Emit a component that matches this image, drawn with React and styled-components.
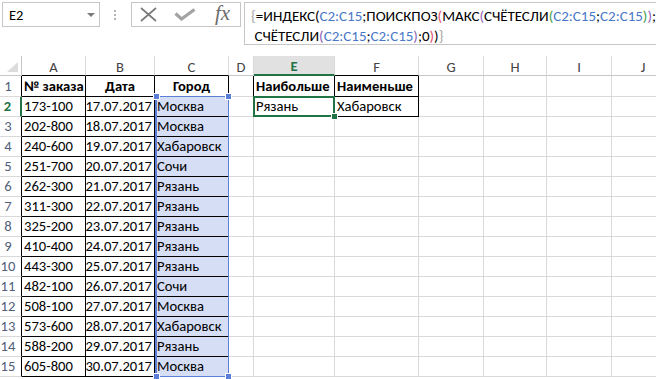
import React from 'react';
import styled, { createGlobalStyle } from 'styled-components';

const FONT = `Carlito, Calibri, "Liberation Sans Narrow", "DejaVu Sans Condensed", "Liberation Sans", sans-serif`;
const GRID = '#d9d9d9';
const GREEN = '#217346';
const REF = '#5b7fd6';

const GlobalStyle = createGlobalStyle`
  html, body { margin: 0; padding: 0; background: #fff; }
  body { font-family: ${FONT}; }
`;

const Window = styled.div`
  width: 656px;
  height: 379px;
  overflow: hidden;
  background: #fff;
`;

/* ---------- formula bar ---------- */
const FormulaBar = styled.div`
  display: flex;
  align-items: flex-start;
  height: 56px;
  padding: 2px 0 0 2px;
  box-sizing: border-box;
`;

const NameBox = styled.div`
  width: 99px;
  height: 25px;
  box-sizing: border-box;
  border: 1px solid #c6c6c6;
  display: flex;
  align-items: center;
  justify-content: space-between;
  padding: 0 4px 0 6px;
  font-size: 14.5px;
  color: #000;
`;

const DropArrow = styled.span`
  width: 0;
  height: 0;
  border-left: 4px solid transparent;
  border-right: 4px solid transparent;
  border-top: 4px solid #7a7a7a;
`;

const Grip = styled.div`
  width: 32px;
  height: 25px;
  display: flex;
  flex-direction: column;
  align-items: center;
  justify-content: center;
  gap: 2px;
  span {
    width: 2px;
    height: 2px;
    background: #b4b4b4;
  }
`;

const Buttons = styled.div`
  width: 110px;
  height: 25px;
  box-sizing: border-box;
  border: 1px solid #c6c6c6;
  display: grid;
  grid-template-columns: 32px 41px 35px;
  align-items: center;
  justify-items: center;
`;

const Fx = styled.span`
  font-family: "Liberation Serif", "DejaVu Serif", serif;
  font-style: italic;
  font-size: 21px;
  color: #6b6b6b;
  line-height: 1;
  margin-top: -2px;
`;

const FormulaBox = styled.div`
  flex: 1;
  height: 43px;
  margin-left: 3px;
  box-sizing: border-box;
  border: 1px solid #c6c6c6;
  border-right: none;
  padding: 3px 0 0 6px;
  font-size: 15px;
  line-height: 20px;
  white-space: pre;
  color: #000;
`;

const Seg = styled.span`
  color: ${p => p.$color};
`;

/* ---------- sheet ---------- */
const COLS = [22, 64, 69, 74, 25, 81, 84, 65, 63, 65, 63];

const Sheet = styled.div`
  display: grid;
  grid-template-columns: ${COLS.map(w => w + 'px').join(' ')};
  grid-template-rows: 20px 21px repeat(14, 20px);
  font-size: 14.6px;
`;

const Corner = styled.div`
  grid-row: 1;
  grid-column: 1;
  box-sizing: border-box;
  border-right: 1px solid #c6c6c6;
  border-bottom: 1px solid #c6c6c6;
  position: relative;
  &::after {
    content: '';
    position: absolute;
    right: 3px;
    bottom: 3px;
    width: 0;
    height: 0;
    border-left: 11px solid transparent;
    border-bottom: 10px solid #dcdcdc;
  }
`;

const ColHead = styled.div`
  grid-row: 1;
  grid-column: ${p => p.$c};
  box-sizing: border-box;
  border-right: 1px solid ${GRID};
  border-bottom: ${p => (p.$active ? `2px solid ${GREEN}` : `1px solid ${p.$under}`)};
  background: ${p => (p.$active ? '#e1e1e1' : '#fff')};
  color: ${p => (p.$active ? GREEN : '#444')};
  font-weight: ${p => (p.$active ? 700 : 400)};
  display: flex;
  align-items: center;
  justify-content: center;
  padding-top: 2px;
`;

const RowHead = styled.div`
  grid-row: ${p => p.$r};
  grid-column: 1;
  box-sizing: border-box;
  border-right: ${p => (p.$active ? `2px solid ${GREEN}` : `1px solid #000`)};
  border-bottom: 1px solid ${GRID};
  color: ${p => (p.$active ? GREEN : '#51607a')};
  font-weight: ${p => (p.$active ? 700 : 400)};
  display: flex;
  align-items: flex-end;
  justify-content: center;
  padding: 0 5px 1px 0;
`;

const Cell = styled.div`
  grid-row: ${p => p.$r};
  grid-column: ${p => p.$c};
  box-sizing: border-box;
  border-right: 1px solid ${p => p.$rb};
  border-bottom: 1px solid ${p => p.$bb};
  background: ${p => p.$bg || '#fff'};
  font-weight: ${p => (p.$bold ? 700 : 400)};
  display: flex;
  align-items: flex-end;
  justify-content: ${p => p.$align};
  padding: 0 2px 1px 2px;
  white-space: nowrap;
  overflow: hidden;
  color: #000;
`;

const RangeMark = styled.div`
  grid-row: 3 / 17;
  grid-column: 4;
  margin: -1px 0 0 0;
  border: 1px solid ${REF};
  border-left-width: 2px;
  position: relative;
  z-index: 2;
  pointer-events: none;
`;

const Knob = styled.span`
  position: absolute;
  width: 5px;
  height: 5px;
  background: ${REF};
  border: 1px solid #fff;
  ${p => (p.$top ? 'top: -4px;' : 'bottom: -4px;')}
  ${p => (p.$left ? 'left: -4px;' : 'right: -4px;')}
`;

const ActiveMark = styled.div`
  grid-row: 3;
  grid-column: 6;
  margin: -1px 0 0 -1px;
  border: 2px solid ${GREEN};
  position: relative;
  z-index: 3;
  pointer-events: none;
`;

const FillHandle = styled.span`
  position: absolute;
  right: -5px;
  bottom: -5px;
  width: 5px;
  height: 5px;
  background: ${GREEN};
  border: 1px solid #fff;
`;

const LETTERS = ['A', 'B', 'C', 'D', 'E', 'F', 'G', 'H', 'I', 'J'];

const orders = ['173-100', '202-800', '240-600', '251-700', '262-300', '311-300', '325-200',
  '410-400', '443-300', '482-100', '508-100', '573-600', '588-200', '605-800'];
const cities = ['Москва', 'Москва', 'Хабаровск', 'Сочи', 'Рязань', 'Рязань', 'Рязань',
  'Рязань', 'Рязань', 'Сочи', 'Москва', 'Хабаровск', 'Рязань', 'Москва'];

const values = {};
values['1-1'] = { v: '№ заказа', bold: true };
values['1-2'] = { v: 'Дата', bold: true, align: 'center' };
values['1-3'] = { v: 'Город', bold: true, align: 'center' };
values['1-5'] = { v: 'Наибольше', bold: true };
values['1-6'] = { v: 'Наименьше', bold: true };
values['2-5'] = { v: 'Рязань' };
values['2-6'] = { v: 'Хабаровск' };
orders.forEach((o, i) => {
  const r = i + 2;
  values[`${r}-1`] = { v: o };
  values[`${r}-2`] = { v: `${17 + i}.07.2017`, align: 'flex-end' };
  values[`${r}-3`] = { v: cities[i] };
});

const boxed = (r, c) =>
  (r >= 1 && r <= 15 && c >= 1 && c <= 3) || (r >= 1 && r <= 2 && c >= 5 && c <= 6);

const K = '#000';
const formula = [
  [
    ['{', '#a6a6a6'], ['=ИНДЕКС(', K], ['C2:C15', '#4a78c8'], [';ПОИСКПОЗ', K], ['(', '#e0506e'],
    ['МАКС', K], ['(', '#8e63b8'], ['СЧЁТЕСЛИ', K], ['(', '#45a04a'], ['C2:C15', '#4a78c8'], [';', K],
    ['C2:C15', '#4a78c8'], [')', '#45a04a'], [')', '#8e63b8'], [';', K],
  ],
  [
    ['\u00a0СЧЁТЕСЛИ', K], ['(', '#8e63b8'], ['C2:C15', '#4a78c8'], [';', K], ['C2:C15', '#4a78c8'],
    [')', '#8e63b8'], [';0', K], [')', '#e0506e'], [')', K], ['}', '#a6a6a6'],
  ],
];

export default function App() {
  const cells = [];
  for (let r = 1; r <= 15; r++) {
    for (let c = 1; c <= 10; c++) {
      const d = values[`${r}-${c}`] || {};
      const rb = boxed(r, c) || boxed(r, c + 1) ? '#000' : GRID;
      const bb = boxed(r, c) || boxed(r + 1, c) ? '#000' : GRID;
      cells.push(
        <Cell
          key={`${r}-${c}`}
          $r={r + 1}
          $c={c + 1}
          $rb={rb}
          $bb={bb}
          $bold={d.bold}
          $align={d.align || 'flex-start'}
          $bg={c === 3 && r >= 2 ? '#d5def5' : null}
        >
          {d.v}
        </Cell>
      );
    }
  }

  return (
    <Window>
      <GlobalStyle />
      <FormulaBar>
        <NameBox>
          E2
          <DropArrow />
        </NameBox>
        <Grip>
          <span />
          <span />
          <span />
        </Grip>
        <Buttons>
          <svg width="17" height="15" viewBox="0 0 17 15">
            <path d="M1 1 L16 14 M16 1 L1 14" stroke="#7a7a7a" strokeWidth="1.7" fill="none" />
          </svg>
          <svg width="22" height="13" viewBox="0 0 22 13">
            <path d="M1.5 5.5 L7.5 11 L20.5 1.5" stroke="#a3a3a3" strokeWidth="3.2" fill="none" />
          </svg>
          <Fx>fx</Fx>
        </Buttons>
        <FormulaBox>
          {formula.map((line, i) => (
            <div key={i}>
              {line.map(([t, col], j) => (
                <Seg key={j} $color={col}>{t}</Seg>
              ))}
            </div>
          ))}
        </FormulaBox>
      </FormulaBar>

      <Sheet>
        <Corner />
        {LETTERS.map((l, i) => {
          const c = i + 1;
          return (
            <ColHead key={l} $c={c + 1} $active={l === 'E'} $under={boxed(1, c) ? '#000' : '#c6c6c6'}>
              {l}
            </ColHead>
          );
        })}
        {Array.from({ length: 15 }, (_, i) => (
          <RowHead key={i} $r={i + 2} $active={i + 1 === 2}>
            {i + 1}
          </RowHead>
        ))}
        {cells}
        <RangeMark>
          <Knob $top $left />
          <Knob $top />
          <Knob $left />
          <Knob />
        </RangeMark>
        <ActiveMark>
          <FillHandle />
        </ActiveMark>
      </Sheet>
    </Window>
  );
}
